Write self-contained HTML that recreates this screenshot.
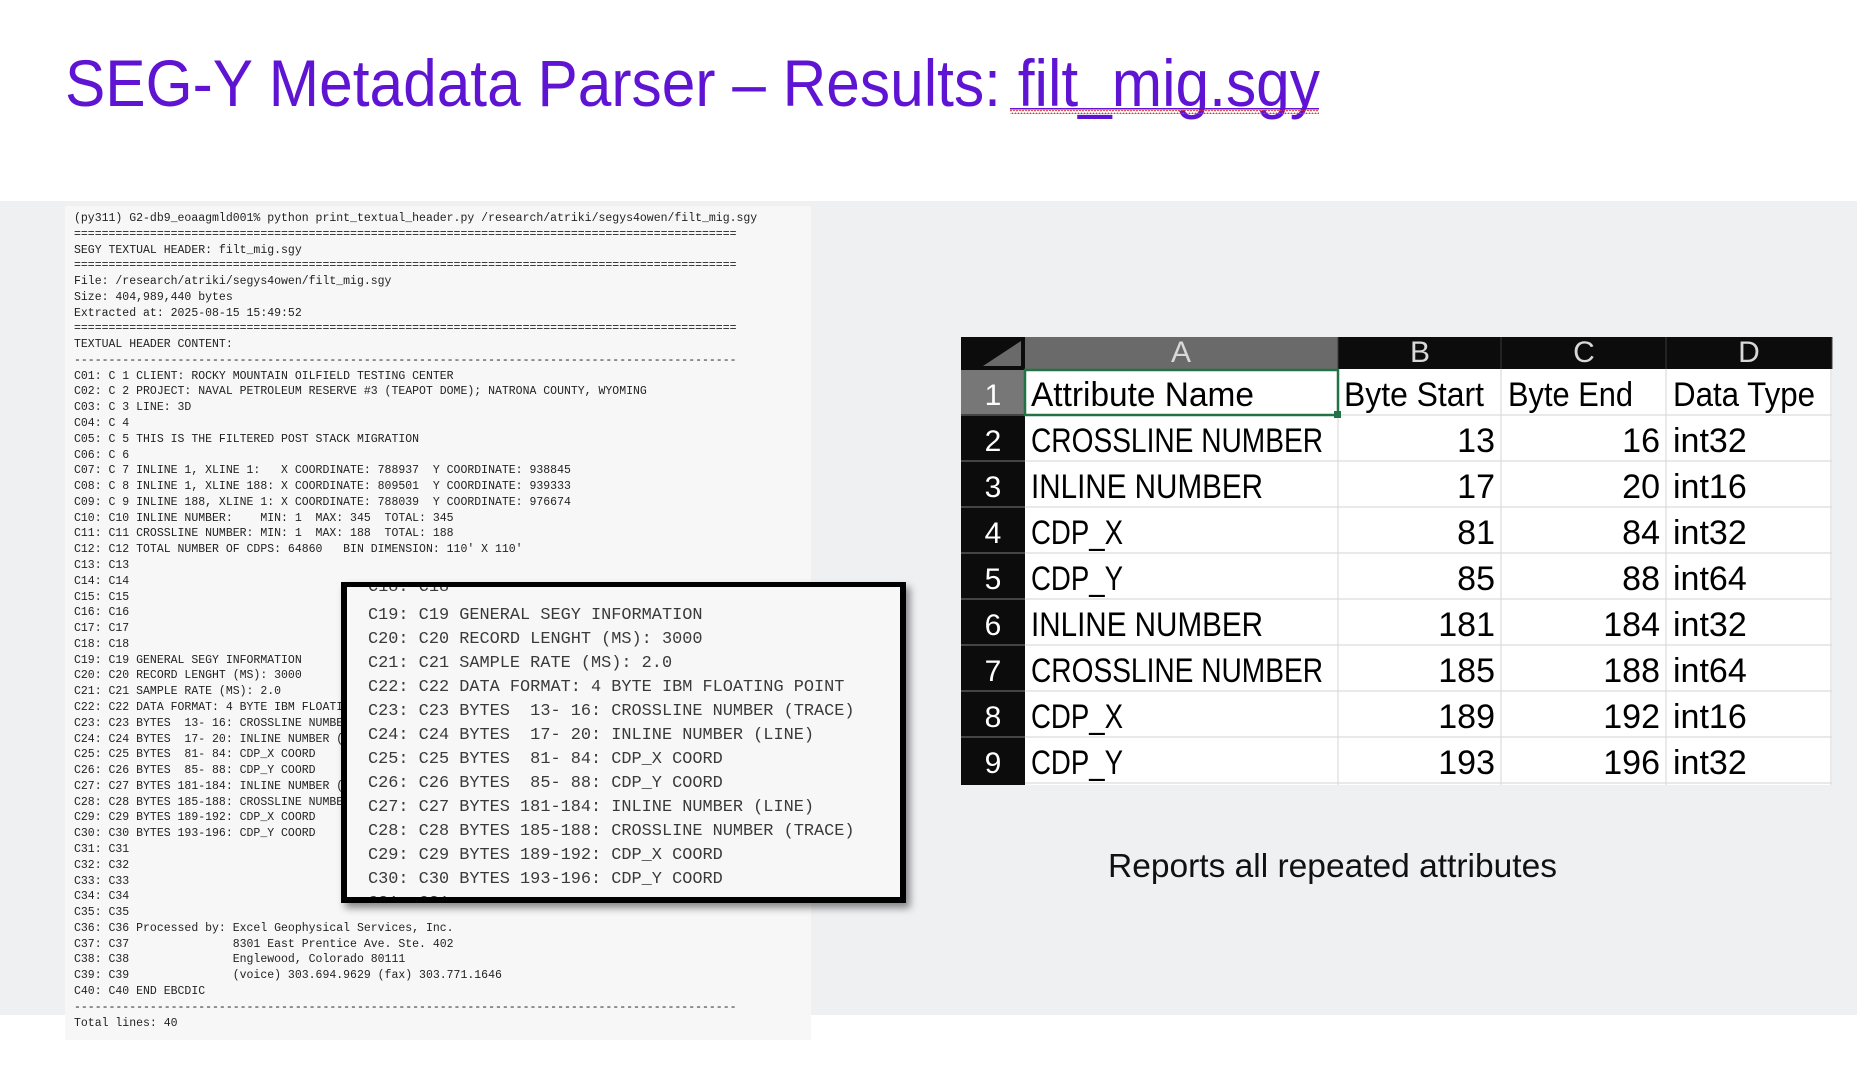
<!DOCTYPE html>
<html><head><meta charset="utf-8"><style>
html,body{margin:0;padding:0;background:#fff;}
svg{display:block;}
text{white-space:pre;}
.m{font-family:"Liberation Mono",monospace;font-size:11.5px;fill:#222;}
.p{font-family:"Liberation Mono",monospace;font-size:16.9px;fill:#3a3a3a;}
.s{font-family:"Liberation Sans",sans-serif;font-size:34px;fill:#000;}
.h{font-family:"Liberation Sans",sans-serif;font-size:30px;fill:#d8d8d8;}
.r{font-family:"Liberation Sans",sans-serif;font-size:30px;fill:#fff;}
</style></head><body>
<svg width="1857" height="1083" viewBox="0 0 1857 1083" xmlns="http://www.w3.org/2000/svg" xml:space="preserve">
<defs>
<filter id="sh" x="-10%" y="-10%" width="130%" height="130%"><feDropShadow dx="4" dy="5" stdDeviation="4" flood-color="#000" flood-opacity="0.45"/></filter>
<clipPath id="pc"><rect x="347" y="587" width="553" height="310"/></clipPath>
<pattern id="wv" x="0" y="0" width="6" height="4" patternUnits="userSpaceOnUse"><path d="M0 3 L1.5 1 L3 3 L4.5 1 L6 3" stroke="#e03030" stroke-width="0.9" fill="none"/></pattern>
</defs>
<rect width="1857" height="1083" fill="#fff"/>
<text x="65" y="106" font-family="Liberation Sans, sans-serif" font-size="66" fill="#5e14d2" textLength="1255" lengthAdjust="spacingAndGlyphs">SEG-Y Metadata Parser – Results: filt_mig.sgy</text>
<rect x="1010" y="108" width="309" height="1.5" fill="#5e14d2"/>
<rect x="1010" y="110" width="309" height="4" fill="url(#wv)"/>
<rect x="0" y="201" width="1857" height="814" fill="#eff0f2"/>
<rect x="65" y="206" width="746" height="834" fill="#f7f7f7"/>
<g class="m">
<text x="74" y="221">(py311) G2-db9_eoaagmld001% python print_textual_header.py /research/atriki/segys4owen/filt_mig.sgy</text>
<text x="74" y="237">================================================================================================</text>
<text x="74" y="253">SEGY TEXTUAL HEADER: filt_mig.sgy</text>
<text x="74" y="268">================================================================================================</text>
<text x="74" y="284">File: /research/atriki/segys4owen/filt_mig.sgy</text>
<text x="74" y="300">Size: 404,989,440 bytes</text>
<text x="74" y="316">Extracted at: 2025-08-15 15:49:52</text>
<text x="74" y="331">================================================================================================</text>
<text x="74" y="347">TEXTUAL HEADER CONTENT:</text>
<text x="74" y="363">------------------------------------------------------------------------------------------------</text>
<text x="74" y="379">C01: C 1 CLIENT: ROCKY MOUNTAIN OILFIELD TESTING CENTER</text>
<text x="74" y="394">C02: C 2 PROJECT: NAVAL PETROLEUM RESERVE #3 (TEAPOT DOME); NATRONA COUNTY, WYOMING</text>
<text x="74" y="410">C03: C 3 LINE: 3D</text>
<text x="74" y="426">C04: C 4</text>
<text x="74" y="442">C05: C 5 THIS IS THE FILTERED POST STACK MIGRATION</text>
<text x="74" y="458">C06: C 6</text>
<text x="74" y="473">C07: C 7 INLINE 1, XLINE 1:   X COORDINATE: 788937  Y COORDINATE: 938845</text>
<text x="74" y="489">C08: C 8 INLINE 1, XLINE 188: X COORDINATE: 809501  Y COORDINATE: 939333</text>
<text x="74" y="505">C09: C 9 INLINE 188, XLINE 1: X COORDINATE: 788039  Y COORDINATE: 976674</text>
<text x="74" y="521">C10: C10 INLINE NUMBER:    MIN: 1  MAX: 345  TOTAL: 345</text>
<text x="74" y="536">C11: C11 CROSSLINE NUMBER: MIN: 1  MAX: 188  TOTAL: 188</text>
<text x="74" y="552">C12: C12 TOTAL NUMBER OF CDPS: 64860   BIN DIMENSION: 110' X 110'</text>
<text x="74" y="568">C13: C13</text>
<text x="74" y="584">C14: C14</text>
<text x="74" y="600">C15: C15</text>
<text x="74" y="615">C16: C16</text>
<text x="74" y="631">C17: C17</text>
<text x="74" y="647">C18: C18</text>
<text x="74" y="663">C19: C19 GENERAL SEGY INFORMATION</text>
<text x="74" y="678">C20: C20 RECORD LENGHT (MS): 3000</text>
<text x="74" y="694">C21: C21 SAMPLE RATE (MS): 2.0</text>
<text x="74" y="710">C22: C22 DATA FORMAT: 4 BYTE IBM FLOATING POINT</text>
<text x="74" y="726">C23: C23 BYTES  13- 16: CROSSLINE NUMBER (TRACE)</text>
<text x="74" y="742">C24: C24 BYTES  17- 20: INLINE NUMBER (LINE)</text>
<text x="74" y="757">C25: C25 BYTES  81- 84: CDP_X COORD</text>
<text x="74" y="773">C26: C26 BYTES  85- 88: CDP_Y COORD</text>
<text x="74" y="789">C27: C27 BYTES 181-184: INLINE NUMBER (LINE)</text>
<text x="74" y="805">C28: C28 BYTES 185-188: CROSSLINE NUMBER (TRACE)</text>
<text x="74" y="820">C29: C29 BYTES 189-192: CDP_X COORD</text>
<text x="74" y="836">C30: C30 BYTES 193-196: CDP_Y COORD</text>
<text x="74" y="852">C31: C31</text>
<text x="74" y="868">C32: C32</text>
<text x="74" y="884">C33: C33</text>
<text x="74" y="899">C34: C34</text>
<text x="74" y="915">C35: C35</text>
<text x="74" y="931">C36: C36 Processed by: Excel Geophysical Services, Inc.</text>
<text x="74" y="947">C37: C37               8301 East Prentice Ave. Ste. 402</text>
<text x="74" y="962">C38: C38               Englewood, Colorado 80111</text>
<text x="74" y="978">C39: C39               (voice) 303.694.9629 (fax) 303.771.1646</text>
<text x="74" y="994">C40: C40 END EBCDIC</text>
<text x="74" y="1010">------------------------------------------------------------------------------------------------</text>
<text x="74" y="1026">Total lines: 40</text>
</g>
<rect x="341" y="582" width="565" height="321" fill="#000" filter="url(#sh)"/>
<rect x="347" y="587" width="553" height="310" fill="#f7f7f7"/>
<g class="p" clip-path="url(#pc)">
<text x="368" y="591">C18: C18</text>
<text x="368" y="619">C19: C19 GENERAL SEGY INFORMATION</text>
<text x="368" y="643">C20: C20 RECORD LENGHT (MS): 3000</text>
<text x="368" y="667">C21: C21 SAMPLE RATE (MS): 2.0</text>
<text x="368" y="691">C22: C22 DATA FORMAT: 4 BYTE IBM FLOATING POINT</text>
<text x="368" y="715">C23: C23 BYTES  13- 16: CROSSLINE NUMBER (TRACE)</text>
<text x="368" y="739">C24: C24 BYTES  17- 20: INLINE NUMBER (LINE)</text>
<text x="368" y="763">C25: C25 BYTES  81- 84: CDP_X COORD</text>
<text x="368" y="787">C26: C26 BYTES  85- 88: CDP_Y COORD</text>
<text x="368" y="811">C27: C27 BYTES 181-184: INLINE NUMBER (LINE)</text>
<text x="368" y="835">C28: C28 BYTES 185-188: CROSSLINE NUMBER (TRACE)</text>
<text x="368" y="859">C29: C29 BYTES 189-192: CDP_X COORD</text>
<text x="368" y="883">C30: C30 BYTES 193-196: CDP_Y COORD</text>
<text x="368" y="907">C31: C31</text>
</g>
<rect x="961" y="337" width="871" height="448" fill="#fff"/>
<rect x="961" y="337" width="871" height="32" fill="#0c0c0c"/>
<rect x="1025" y="337" width="313" height="32" fill="#6a6a6a"/>
<polygon points="983,366 1021,366 1021,341" fill="#6a6a6a"/>
<rect x="961" y="369" width="64" height="416" fill="#0c0c0c"/>
<rect x="961" y="370" width="64" height="44" fill="#777"/>
<g stroke="#3a3a3a" stroke-width="1"><line x1="1338" y1="337" x2="1338" y2="369"/><line x1="1501" y1="337" x2="1501" y2="369"/><line x1="1666" y1="337" x2="1666" y2="369"/><line x1="1832" y1="337" x2="1832" y2="369"/></g>
<g stroke="#dcdcdc" stroke-width="1.2">
<line x1="1338" y1="369" x2="1338" y2="785"/><line x1="1501" y1="369" x2="1501" y2="785"/><line x1="1666" y1="369" x2="1666" y2="785"/><line x1="1831" y1="369" x2="1831" y2="785"/>
<line x1="1025" y1="415" x2="1832" y2="415"/><line x1="1025" y1="461" x2="1832" y2="461"/><line x1="1025" y1="507" x2="1832" y2="507"/><line x1="1025" y1="553" x2="1832" y2="553"/><line x1="1025" y1="599" x2="1832" y2="599"/><line x1="1025" y1="645" x2="1832" y2="645"/><line x1="1025" y1="691" x2="1832" y2="691"/><line x1="1025" y1="737" x2="1832" y2="737"/><line x1="1025" y1="783" x2="1832" y2="783"/>
</g>
<g stroke="#444" stroke-width="2"><line x1="961" y1="415" x2="1025" y2="415"/><line x1="961" y1="461" x2="1025" y2="461"/><line x1="961" y1="507" x2="1025" y2="507"/><line x1="961" y1="553" x2="1025" y2="553"/><line x1="961" y1="599" x2="1025" y2="599"/><line x1="961" y1="645" x2="1025" y2="645"/><line x1="961" y1="691" x2="1025" y2="691"/><line x1="961" y1="737" x2="1025" y2="737"/></g>
<rect x="1025" y="370" width="313" height="45" fill="none" stroke="#217346" stroke-width="2.5"/>
<rect x="1334" y="411" width="7" height="7" fill="#217346"/>
<g class="h" text-anchor="middle"><text x="1181" y="362">A</text><text x="1420" y="362">B</text><text x="1584" y="362">C</text><text x="1749" y="362">D</text></g>
<g class="r" text-anchor="middle"><text x="993" y="405">1</text><text x="993" y="451">2</text><text x="993" y="497">3</text><text x="993" y="543">4</text><text x="993" y="589">5</text><text x="993" y="635">6</text><text x="993" y="681">7</text><text x="993" y="727">8</text><text x="993" y="773">9</text></g>
<g class="s">
<text x="1031" y="406" textLength="223" lengthAdjust="spacingAndGlyphs">Attribute Name</text>
<text x="1344" y="406" textLength="140" lengthAdjust="spacingAndGlyphs">Byte Start</text>
<text x="1508" y="406" textLength="125" lengthAdjust="spacingAndGlyphs">Byte End</text>
<text x="1673" y="406" textLength="142" lengthAdjust="spacingAndGlyphs">Data Type</text>
<text x="1031" y="452" textLength="292" lengthAdjust="spacingAndGlyphs">CROSSLINE NUMBER</text>
<text x="1031" y="498" textLength="232" lengthAdjust="spacingAndGlyphs">INLINE NUMBER</text>
<text x="1031" y="544" textLength="92" lengthAdjust="spacingAndGlyphs">CDP_X</text>
<text x="1031" y="590" textLength="92" lengthAdjust="spacingAndGlyphs">CDP_Y</text>
<text x="1031" y="636" textLength="232" lengthAdjust="spacingAndGlyphs">INLINE NUMBER</text>
<text x="1031" y="682" textLength="292" lengthAdjust="spacingAndGlyphs">CROSSLINE NUMBER</text>
<text x="1031" y="728" textLength="92" lengthAdjust="spacingAndGlyphs">CDP_X</text>
<text x="1031" y="774" textLength="92" lengthAdjust="spacingAndGlyphs">CDP_Y</text>
</g>
<g class="s" text-anchor="end">
<text x="1495" y="452">13</text><text x="1495" y="498">17</text><text x="1495" y="544">81</text><text x="1495" y="590">85</text><text x="1495" y="636">181</text><text x="1495" y="682">185</text><text x="1495" y="728">189</text><text x="1495" y="774">193</text>
<text x="1660" y="452">16</text><text x="1660" y="498">20</text><text x="1660" y="544">84</text><text x="1660" y="590">88</text><text x="1660" y="636">184</text><text x="1660" y="682">188</text><text x="1660" y="728">192</text><text x="1660" y="774">196</text>
</g>
<g class="s">
<text x="1673" y="452">int32</text><text x="1673" y="498">int16</text><text x="1673" y="544">int32</text><text x="1673" y="590">int64</text><text x="1673" y="636">int32</text><text x="1673" y="682">int64</text><text x="1673" y="728">int16</text><text x="1673" y="774">int32</text>
</g>
<text x="1108" y="877" font-family="Liberation Sans, sans-serif" font-size="33" fill="#111" textLength="449" lengthAdjust="spacingAndGlyphs">Reports all repeated attributes</text>
</svg>
</body></html>
